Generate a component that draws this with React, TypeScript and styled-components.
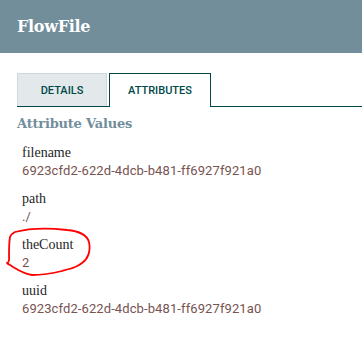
import React from "react";
import styled, { createGlobalStyle } from "styled-components";

const Global = createGlobalStyle`
  html, body { margin: 0; padding: 0; background: #ffffff; }
  body { font-family: Roboto, "Liberation Sans", sans-serif; }
`;

const Page = styled.div`
  position: relative;
  width: 362px;
  height: 353px;
  overflow: hidden;
  background: #ffffff;
`;

const Header = styled.header`
  height: 53px;
  background: #728e9b;
  display: flex;
  align-items: center;
  padding-left: 17px;
  box-sizing: border-box;
`;

const Title = styled.h1`
  margin: 0;
  color: #ffffff;
  font-family: "DejaVu Serif", serif;
  font-weight: bold;
  font-size: 16px;
  letter-spacing: -0.3px;
`;

const Body = styled.div`
  padding: 20px 0 0 17px;
`;

const TabBar = styled.div`
  display: flex;
  gap: 2px;
  height: 33px;
  border-bottom: 1px solid #004849;
`;

const Tab = styled.div<{ $active?: boolean; $width: number }>`
  width: ${(p) => p.$width}px;
  box-sizing: border-box;
  display: flex;
  align-items: center;
  justify-content: center;
  font-family: Roboto, "Liberation Sans", sans-serif;
  font-size: 11px;
  font-weight: 500;
  color: #004849;
  text-transform: uppercase;
  background: ${(p) => (p.$active ? "#ffffff" : "#e3e8eb")};
  border: 1px solid ${(p) => (p.$active ? "#004849" : "#cfd8dc")};
  border-bottom: none;
  height: ${(p) => (p.$active ? "34px" : "33px")};
`;

const SectionTitle = styled.h2`
  margin: 9px 0 0 0;
  font-family: "DejaVu Serif", serif;
  font-weight: bold;
  font-size: 13px;
  letter-spacing: -0.2px;
  color: #728e9b;
`;

const List = styled.div`
  padding: 13px 0 0 5px;
  display: flex;
  flex-direction: column;
  gap: 10px;
`;

const Entry = styled.div`
  position: relative;
  display: flex;
  flex-direction: column;
`;

const Name = styled.div`
  font-family: "Liberation Serif", serif;
  font-size: 14px;
  line-height: 18px;
  color: #262626;
`;

const Value = styled.div`
  font-family: Roboto, "Liberation Sans", sans-serif;
  font-size: 13px;
  letter-spacing: 0.1px;
  line-height: 18px;
  color: #775351;
`;

const Circle = styled.svg`
  position: absolute;
  left: -22px;
  top: -11px;
  overflow: visible;
  pointer-events: none;
`;

const entries = [
  { name: "filename", value: "6923cfd2-622d-4dcb-b481-ff6927f921a0" },
  { name: "path", value: "./" },
  { name: "theCount", value: "2", marked: true },
  { name: "uuid", value: "6923cfd2-622d-4dcb-b481-ff6927f921a0" },
];

export default function App() {
  return (
    <Page>
      <Global />
      <Header>
        <Title>FlowFile</Title>
      </Header>
      <Body>
        <TabBar>
          <Tab $width={90}>Details</Tab>
          <Tab $width={102} $active>
            Attributes
          </Tab>
        </TabBar>
        <SectionTitle>Attribute Values</SectionTitle>
        <List>
          {entries.map((e) => (
            <Entry key={e.name}>
              <Name>{e.name}</Name>
              <Value>{e.value}</Value>
              {e.marked && (
                <Circle width="95" height="55" viewBox="0 0 95 55">
                  <path
                    d="M15 7 C30 3 50 3 67 5 C78 6 87 10 89 17 C91 26 88 34 82 38 C77 42 73 43 62 46 C50 49 40 50 32 50 C24 49 18 45 13 42 C10 40 8 39 7 38 C10 37 9 34 9 30 C9 25 9 18 10 12 C11 9 13 8 15 7 Z"
                    fill="none"
                    stroke="#ff0000"
                    strokeWidth="1.8"
                    strokeLinejoin="round"
                  />
                </Circle>
              )}
            </Entry>
          ))}
        </List>
      </Body>
    </Page>
  );
}
